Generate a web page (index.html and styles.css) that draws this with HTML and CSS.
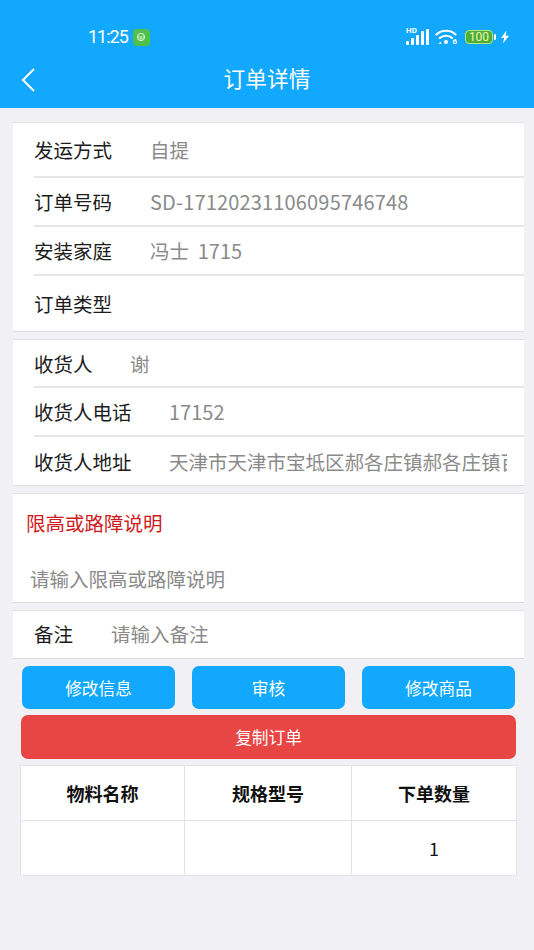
FILE: index.html
```html
<!DOCTYPE html>
<html>
<head>
    <title>订单详情</title>
    <meta charset="UTF-8">
    <link rel="stylesheet" href="styles.css">
</head>
<body>
    <div class="header">
        <div class="statusbar">
            <span class="time">11:25</span>
            <span class="app-badge">
                <svg width="12" height="12" viewBox="0 0 12 12"><circle cx="6" cy="6" r="3.6" fill="none" stroke="#fff" stroke-width="0.9"/><path d="M2.6 6h6.8M4.4 7.8h3.2" stroke="#fff" stroke-width="0.8"/></svg>
            </span>
            <div class="status-right">
                <span class="signal">
                    <span class="hd">HD</span>
                    <svg width="24" height="18" viewBox="0 0 24 18"><g fill="#fff"><rect x="0" y="13" width="3" height="4" rx="1"/><rect x="5" y="10" width="3" height="7" rx="1"/><rect x="10" y="7" width="3" height="10" rx="1"/><rect x="15" y="3" width="3" height="14" rx="1"/><rect x="20" y="1" width="3" height="16" rx="1"/></g></svg>
                </span>
                <span class="wifi">
                    <svg width="22" height="18" viewBox="0 0 22 18"><g fill="none" stroke="#fff" stroke-width="2.2" stroke-linecap="round"><path d="M1.5 6.5C6.5 1.5 15.5 1.5 20.5 6.5"/><path d="M4.8 10C8 7 14 7 17.2 10"/></g><circle cx="11" cy="14" r="2" fill="#fff"/><path d="M3.5 16l2-2.5 1 2.5z" fill="#fff"/></svg>
                    <span class="wifi-gen">6</span>
                </span>
                <span class="battery"><span class="battery-level">100</span></span>
                <span class="battery-tip"></span>
                <svg width="10" height="14" viewBox="0 0 10 14"><path d="M6.5 0.5 1 8h3.2L3 13.5 9 5.8H5.6z" fill="#fff"/></svg>
            </div>
        </div>
        <div class="navbar">
            <svg class="back" width="16" height="26" viewBox="0 0 16 26"><path d="M14 2 3 13l11 11" fill="none" stroke="#fff" stroke-width="2"/></svg>
            <span class="title">订单详情</span>
        </div>
    </div>

    <div class="section section-first">
        <div class="row row-a"><span class="label">发运方式</span><span class="value">自提</span></div>
        <div class="row row-b"><span class="label">订单号码</span><span class="value"><span class="num order-no">SD-17120231106095746748</span></span></div>
        <div class="row row-b"><span class="label">安装家庭</span><span class="value">冯士&nbsp;&nbsp;<span class="num">1715</span></span></div>
        <div class="row row-a"><span class="label">订单类型</span><span class="value"></span></div>
    </div>

    <div class="section">
        <div class="row row-d"><span class="label label-short">收货人</span><span class="value">谢</span></div>
        <div class="row row-b"><span class="label label-long">收货人电话</span><span class="value"><span class="num">17152</span></span></div>
        <div class="row row-e"><span class="label label-long">收货人地址</span><span class="value value-clip">天津市天津市宝坻区郝各庄镇郝各庄镇百</span></div>
    </div>

    <div class="section limit">
        <div class="limit-title">限高或路障说明</div>
        <div class="limit-input">请输入限高或路障说明</div>
    </div>

    <div class="section">
        <div class="row row-note"><span class="label label-note">备注</span><span class="value">请输入备注</span></div>
    </div>

    <div class="actions">
        <button class="btn">修改信息</button>
        <button class="btn">审核</button>
        <button class="btn">修改商品</button>
    </div>
    <button class="btn-copy">复制订单</button>

    <table class="goods">
        <tr><th class="col-a">物料名称</th><th class="col-b">规格型号</th><th>下单数量</th></tr>
        <tr><td></td><td></td><td>1</td></tr>
    </table>
</body>
</html>
```
FILE: styles.css
```css
* {
    box-sizing: border-box;
}
html, body {
    height: 100%;
}
body {
    margin: 0;
    background-color: #f0f0f5;
    font-family: "Noto Sans CJK SC", "Liberation Sans", sans-serif;
    overflow: hidden;
}
.header {
    height: 108px;
    background-color: #12a8fe;
    color: white;
    padding-top: 24px;
}
.statusbar {
    height: 26px;
    display: flex;
    align-items: center;
    padding-left: 88px;
    padding-right: 24px;
}
.time {
    font-family: Roboto, sans-serif;
    font-size: 18px;
    letter-spacing: -1px;
    line-height: 26px;
}
.app-badge {
    width: 17px;
    height: 17px;
    margin-left: 5px;
    background-color: #4fc04a;
    border-radius: 4px;
    display: flex;
    align-items: center;
    justify-content: center;
}
.status-right {
    margin-left: auto;
    display: flex;
    align-items: center;
}
.signal {
    position: relative;
    display: flex;
}
.hd {
    position: absolute;
    left: 0;
    top: -2px;
    font-family: Roboto, sans-serif;
    font-size: 8px;
    font-weight: 700;
    line-height: 9px;
}
.wifi {
    position: relative;
    display: flex;
    margin-left: 5px;
}
.wifi-gen {
    position: absolute;
    right: 0;
    bottom: 0;
    font-family: Roboto, sans-serif;
    font-size: 8px;
    font-weight: 700;
    line-height: 8px;
}
.battery {
    width: 28px;
    height: 14px;
    margin-left: 8px;
    border: 1.5px solid #b4e87a;
    border-radius: 4px;
    background-color: #4fae38;
    display: flex;
    align-items: center;
    justify-content: center;
}
.battery-level {
    font-family: Roboto, sans-serif;
    font-size: 12px;
    line-height: 12px;
    color: #eaf7b0;
}
.battery-tip {
    width: 2px;
    height: 6px;
    margin-left: 1px;
    margin-right: 4px;
    background-color: white;
    border-radius: 1px;
}
.navbar {
    height: 58px;
    display: flex;
    align-items: center;
    justify-content: center;
    position: relative;
    padding-bottom: 2px;
}
.back {
    position: absolute;
    left: 20px;
    top: 17px;
}
.title {
    font-size: 21.7px;
    line-height: 56px;
}
.section {
    margin: 7px 10px 0 13px;
    background-color: white;
    border-top: 1px solid #e0e0e4;
    border-bottom: 1px solid #dcdce0;
}
.section-first {
    margin-top: 14px;
}
.row {
    margin-left: 21px;
    display: flex;
    align-items: center;
    border-bottom: 2px solid #e6e6e8;
    white-space: nowrap;
    overflow: hidden;
}
.row:last-child {
    border-bottom: none;
}
.row-a {
    height: 55px;
}
.row-b {
    height: 49px;
}
.row-d {
    height: 48px;
}
.row-e {
    height: 48px;
}
.row-note {
    height: 47px;
    padding-bottom: 2px;
}
.label {
    width: 116px;
    flex-shrink: 0;
    font-size: 19.5px;
    color: #1c1c1c;
}
.label-short {
    width: 96px;
}
.label-long {
    width: 135px;
}
.label-note {
    width: 77px;
}
.value {
    font-size: 19.5px;
    color: #8a8a8a;
    overflow: hidden;
}
.value-clip {
    margin-right: 17px;
}
.num {
    font-size: 20px;
}
.order-no {
    letter-spacing: 0.17px;
}
.limit {
    height: 110px;
}
.limit-title {
    padding: 16px 0 0 13px;
    font-size: 19.5px;
    line-height: 26px;
    color: #cf1a20;
}
.limit-input {
    padding: 30px 0 0 17px;
    font-size: 19.5px;
    line-height: 26px;
    color: #8a8a8a;
}
.actions {
    display: flex;
    justify-content: space-between;
    margin: 7px 19px 0 22px;
}
.btn {
    width: 153px;
    height: 43px;
    border: none;
    border-radius: 7px;
    background-color: #12a8fe;
    color: white;
    font-family: inherit;
    font-size: 16.7px;
}
.btn-copy {
    display: block;
    width: 495px;
    height: 44px;
    margin: 6px 0 0 21px;
    border: none;
    border-radius: 7px;
    background-color: #e84545;
    color: white;
    font-family: inherit;
    font-size: 16.7px;
}
.goods {
    width: 497px;
    margin: 6px 0 0 20px;
    border-collapse: collapse;
    table-layout: fixed;
    background-color: white;
}
.goods th, .goods td {
    height: 55px;
    padding: 0;
    border: 1.5px solid #e4e4e8;
    text-align: center;
    color: #111;
    font-size: 18px;
}
.goods th {
    font-weight: bold;
}
.col-a {
    width: 164px;
}
.col-b {
    width: 167px;
}
```
